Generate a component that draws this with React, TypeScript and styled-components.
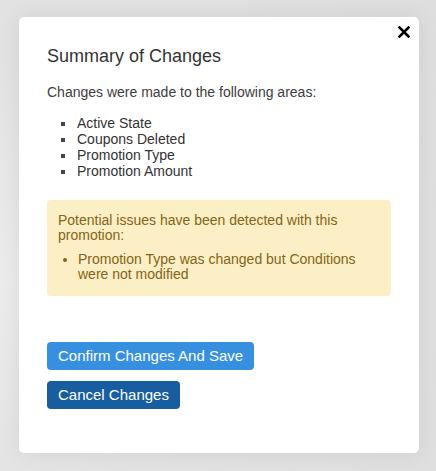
import React from "react";
import styled, { createGlobalStyle } from "styled-components";

const GlobalStyle = createGlobalStyle`
  html, body {
    margin: 0;
    padding: 0;
    background: #e4e4e4;
  }
  body {
    font-family: "Liberation Sans", Arial, sans-serif;
  }
`;

const Backdrop = styled.div`
  width: 436px;
  height: 471px;
  box-sizing: border-box;
  padding: 17px 17px 18px 19px;
  background: radial-gradient(circle at 0% 60%, #ececec 0%, #e3e3e3 40%, #dedede 100%);
  overflow: hidden;
`;

const Modal = styled.div`
  position: relative;
  width: 400px;
  height: 436px;
  box-sizing: border-box;
  padding: 28px 28px 0 28px;
  background: #ffffff;
  border-radius: 5px;
  box-shadow: 0 0 22px rgba(0, 0, 0, 0.08);
`;

const CloseButton = styled.button`
  position: absolute;
  top: 9px;
  right: 9px;
  width: 12px;
  height: 12px;
  padding: 0;
  border: none;
  background: transparent;
  cursor: pointer;
  display: flex;
`;

const Title = styled.h2`
  margin: 0;
  font-size: 18px;
  line-height: 22px;
  font-weight: normal;
  color: #333333;
`;

const Intro = styled.p`
  margin: 17px 0 0;
  font-size: 14px;
  line-height: 16px;
  color: #3d3d3d;
`;

const AreaList = styled.ul`
  margin: 15px 0 0;
  padding-left: 30px;
  list-style: none;
  font-size: 14px;
  line-height: 16px;
  color: #333333;
`;

const AreaItem = styled.li`
  position: relative;

  &::before {
    content: "";
    position: absolute;
    left: -16px;
    top: 7px;
    width: 4px;
    height: 4px;
    background: #444444;
  }
`;

const Warning = styled.div`
  margin-top: 21px;
  padding: 13px 11px 14px;
  background: #fcefc5;
  border-radius: 4px;
  font-size: 14px;
  line-height: 15px;
  color: #846418;
`;

const WarningText = styled.p`
  margin: 0;
`;

const WarningList = styled.ul`
  margin: 9px 0 0;
  padding-left: 20px;
  list-style: disc;
`;

const Actions = styled.div`
  margin-top: 46px;
  display: flex;
  flex-direction: column;
  align-items: flex-start;
  gap: 11px;
`;

const Button = styled.button<{ $tone: "primary" | "dark" }>`
  height: 28px;
  padding: 0 11px;
  border: none;
  border-radius: 4px;
  font-family: "Liberation Sans", Arial, sans-serif;
  font-size: 15px;
  line-height: 28px;
  color: #ffffff;
  cursor: pointer;
  background: ${(p) => (p.$tone === "primary" ? "#3790df" : "#175da0")};
`;

const areas = ["Active State", "Coupons Deleted", "Promotion Type", "Promotion Amount"];

export default function App() {
  return (
    <>
      <GlobalStyle />
      <Backdrop>
        <Modal>
          <CloseButton aria-label="Close">
            <svg width="12" height="12" viewBox="0 0 12 12">
              <path d="M1.5 1.5 L10.5 10.5 M10.5 1.5 L1.5 10.5" stroke="#000" strokeWidth="2.6" strokeLinecap="square" />
            </svg>
          </CloseButton>
          <Title>Summary of Changes</Title>
          <Intro>Changes were made to the following areas:</Intro>
          <AreaList>
            {areas.map((a) => (
              <AreaItem key={a}>{a}</AreaItem>
            ))}
          </AreaList>
          <Warning>
            <WarningText>Potential issues have been detected with this promotion:</WarningText>
            <WarningList>
              <li>Promotion Type was changed but Conditions were not modified</li>
            </WarningList>
          </Warning>
          <Actions>
            <Button $tone="primary">Confirm Changes And Save</Button>
            <Button $tone="dark">Cancel Changes</Button>
          </Actions>
        </Modal>
      </Backdrop>
    </>
  );
}
